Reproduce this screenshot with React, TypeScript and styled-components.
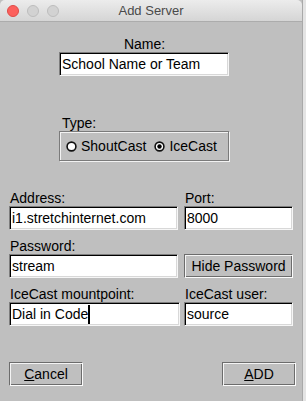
import styled, { createGlobalStyle } from "styled-components";

const GlobalStyle = createGlobalStyle`
  html, body {
    margin: 0;
    padding: 0;
    background: #e4e4e4;
  }
  body {
    font-family: "Liberation Sans", Arial, sans-serif;
  }
`;

const Window = styled.div`
  width: 303px;
  height: 401px;
  display: flex;
  flex-direction: column;
  background: #bfbfbf;
  border-right: 1px solid #a9a9a9;
  box-sizing: border-box;
`;

const TitleBar = styled.div`
  height: 22px;
  box-sizing: border-box;
  display: flex;
  align-items: center;
  position: relative;
  padding-left: 7px;
  gap: 8px;
  background: linear-gradient(#ececec, #d5d5d5);
  border-bottom: 1px solid #acacac;
  border-top-left-radius: 5px;
  border-top-right-radius: 5px;
`;

const Light = styled.span<{ $color: string; $edge: string }>`
  width: 12px;
  height: 12px;
  border-radius: 50%;
  box-sizing: border-box;
  background: ${({ $color }) => $color};
  border: 1px solid ${({ $edge }) => $edge};
`;

const Title = styled.div`
  position: absolute;
  left: 0;
  right: 0;
  text-align: center;
  font-size: 13px;
  color: #4a4a4a;
  pointer-events: none;
`;

const Body = styled.div`
  flex: 1;
  display: flex;
  flex-direction: column;
  padding: 14px 0 15px 9px;
`;

const Centered = styled.div<{ $top?: number }>`
  width: 170px;
  margin-left: 50px;
  margin-top: ${({ $top }) => $top || 0}px;
  display: flex;
  flex-direction: column;
`;

const Label = styled.div<{ $center?: boolean }>`
  font-size: 14px;
  line-height: 16px;
  height: 16px;
  color: #000;
  padding-left: 1px;
  text-align: ${({ $center }) => ($center ? "center" : "left")};
`;

const Field = styled.div<{ $width: number }>`
  width: ${({ $width }) => $width}px;
  height: 24px;
  box-sizing: border-box;
  background: #fff;
  border: 1px solid;
  border-color: #7d7d7d #f6f6f6 #f6f6f6 #7d7d7d;
  box-shadow: inset 1px 1px 0 #000, inset -1px -1px 0 #d8d8d8;
  padding: 0 2px;
  font-size: 14px;
  line-height: 22px;
  color: #000;
  white-space: nowrap;
  overflow: hidden;
  display: flex;
  align-items: center;
`;

const Caret = styled.span`
  display: inline-block;
  width: 2px;
  height: 19px;
  margin-left: 0;
  background: #000;
`;

const GroupBox = styled.div`
  height: 30px;
  box-sizing: border-box;
  border: 1px solid #7b7b7b;
  box-shadow: inset 1px 1px 0 #f2f2f2, 1px 1px 0 #f2f2f2;
  display: flex;
  align-items: center;
  padding-left: 6px;
`;

const RadioOption = styled.label`
  display: flex;
  align-items: center;
  gap: 4px;
  font-size: 14px;
  color: #000;
  margin-right: 8px;
`;

const FormGrid = styled.div`
  margin-top: 29px;
  display: grid;
  grid-template-columns: 171px 110px;
  column-gap: 4px;
  row-gap: 8px;
`;

const Cell = styled.div`
  display: flex;
  flex-direction: column;
`;

const Button = styled.button<{ $width: number }>`
  width: ${({ $width }) => $width}px;
  height: 24px;
  box-sizing: border-box;
  padding: 0;
  background: #bfbfbf;
  border: 1px solid;
  border-color: #6c6c6c #fbfbfb #fbfbfb #6c6c6c;
  box-shadow: inset 1px 1px 0 #f4f4f4, inset -1px -1px 0 #6c6c6c;
  font-family: "Liberation Sans", Arial, sans-serif;
  font-size: 14px;
  color: #000;
  cursor: pointer;
`;

const Footer = styled.div`
  margin-top: auto;
  padding-right: 6px;
  display: flex;
  justify-content: space-between;
`;

const Radio = ({ checked }: { checked?: boolean }) => (
  <svg width="11" height="11" viewBox="0 0 11 11">
    <circle cx="5.5" cy="5.5" r="4.4" fill="#fff" stroke="#111" strokeWidth="1.6" />
    {checked && <circle cx="5.5" cy="5.5" r="2.2" fill="#000" />}
  </svg>
);

const App = () => {
  return (
    <>
      <GlobalStyle />
      <Window>
        <TitleBar>
          <Light $color="#fc605c" $edge="#de4b47" />
          <Light $color="#d2d2d2" $edge="#bdbdbd" />
          <Light $color="#d2d2d2" $edge="#bdbdbd" />
          <Title>Add Server</Title>
        </TitleBar>
        <Body>
          <Centered>
            <Label $center>Name:</Label>
            <Field $width={170}>School Name or Team</Field>
          </Centered>
          <Centered $top={39}>
            <Label style={{ paddingLeft: 3 }}>Type:</Label>
            <GroupBox>
              <RadioOption>
                <Radio />
                ShoutCast
              </RadioOption>
              <RadioOption>
                <Radio checked />
                IceCast
              </RadioOption>
            </GroupBox>
          </Centered>
          <FormGrid>
            <Cell>
              <Label>Address:</Label>
              <Field $width={169}>i1.stretchinternet.com</Field>
            </Cell>
            <Cell>
              <Label>Port:</Label>
              <Field $width={109}>8000</Field>
            </Cell>
            <Cell>
              <Label>Password:</Label>
              <Field $width={169}>stream</Field>
            </Cell>
            <Cell>
              <Label />
              <Button $width={109}>Hide Password</Button>
            </Cell>
            <Cell>
              <Label>IceCast mountpoint:</Label>
              <Field $width={171}>
                Dial in Code
                <Caret />
              </Field>
            </Cell>
            <Cell>
              <Label>IceCast user:</Label>
              <Field $width={109}>source</Field>
            </Cell>
          </FormGrid>
          <Footer>
            <Button $width={74}>
              <u>C</u>ancel
            </Button>
            <Button $width={74}>
              <u>A</u>DD
            </Button>
          </Footer>
        </Body>
      </Window>
    </>
  );
};

export default App;
